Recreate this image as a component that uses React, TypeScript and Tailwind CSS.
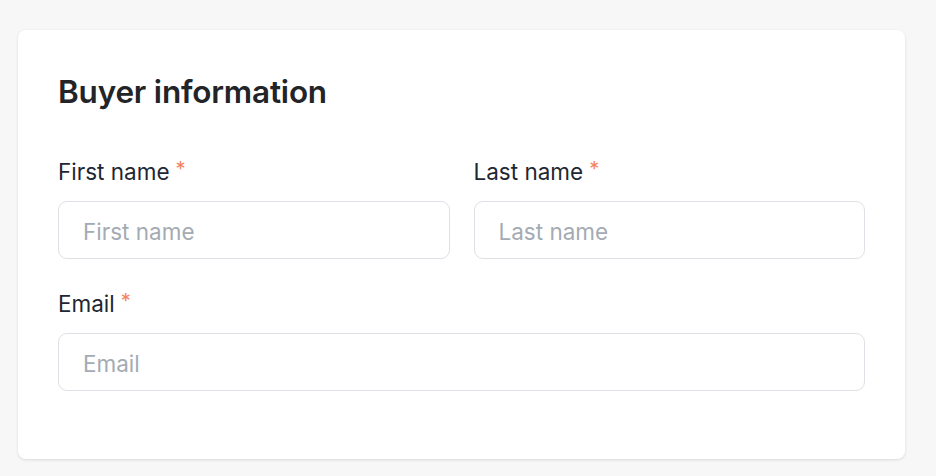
import React from "react";

function Field({ label, placeholder }: { label: string; placeholder: string }) {
  return (
    <div className="flex flex-col">
      <label className="text-[22.5px] leading-[28px] text-[#1f2733] flex items-start">
        <span>{label}</span>
        <span className="ml-[6px] text-[#f4825e] text-[20px] leading-[22px]">*</span>
      </label>
      <input
        placeholder={placeholder}
        className="mt-[15px] h-[58px] w-full rounded-[9px] border border-[#dde1e5] bg-white px-[24px] pt-[2px] text-[22.5px] text-[#1f2733] placeholder:text-[#a4abb3] outline-none"
        style={{ fontFamily: "Inter, sans-serif" }}
      />
    </div>
  );
}

export default function App() {
  return (
    <div
      className="min-h-[476px] w-[936px] bg-[#f7f7f7] pt-[30px] pl-[18px]"
      style={{ fontFamily: "Inter, 'Noto Sans', sans-serif" }}
    >
      <div className="w-[887px] rounded-[8px] bg-white px-[40px] pt-[42px] pb-[68px] shadow-[0_1px_3px_rgba(0,0,0,0.12)]">
        <h1 className="text-[31.5px] leading-[40px] font-semibold text-[#222427] tracking-[-0.2px]">
          Buyer information
        </h1>
        <div className="mt-[46px] grid grid-cols-2 gap-x-[24px]">
          <Field label="First name" placeholder="First name" />
          <Field label="Last name" placeholder="Last name" />
        </div>
        <div className="mt-[31px]">
          <Field label="Email" placeholder="Email" />
        </div>
      </div>
    </div>
  );
}
